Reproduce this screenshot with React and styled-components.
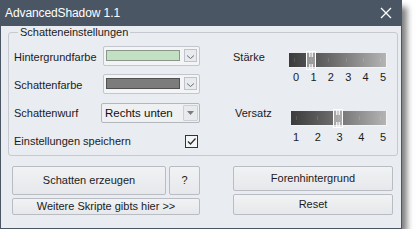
import React from 'react';
import styled, { createGlobalStyle } from 'styled-components';

const GlobalStyle = createGlobalStyle`
  html, body {
    margin: 0;
    padding: 0;
    background: #ffffff;
  }
  body {
    font-family: "Liberation Sans", Arial, sans-serif;
    font-size: 11px;
    color: #1b1b1b;
  }
`;

const sliders = [
  { label: 'Stärke', min: 0, max: 5, value: 1, top: 8, numGap: 1, indent: 0, numPad: '0 1px 0 4px' },
  { label: 'Versatz', min: 1, max: 5, value: 3, top: 10, numGap: 3, indent: 2, numPad: '0 1px 0 2px' },
];

const Chevron = () => (
  <svg width="9" height="6" viewBox="0 0 9 6">
    <path d="M1 1.5 L4.5 4.5 L8 1.5" stroke="#6a6e74" strokeWidth="1" fill="none" />
  </svg>
);

const App = () => {
  return (
    <>
      <GlobalStyle />
      <Window>
        <TitleBar>
          <Title>AdvancedShadow 1.1</Title>
          <CloseIcon width="12" height="12" viewBox="0 0 12 12">
            <path d="M1 1 L11 11 M11 1 L1 11" stroke="#ffffff" strokeWidth="1.3" fill="none" />
          </CloseIcon>
        </TitleBar>
        <Body>
          <Group>
            <Legend>Schatteneinstellungen</Legend>
            <GroupContent>
              <LeftColumn>
                <Row>
                  <Label>Hintergrundfarbe</Label>
                  <ColorPicker>
                    <Swatch $color="#c2e0c2" $edge="#8a968a" />
                    <PickButton>
                      <Chevron />
                    </PickButton>
                  </ColorPicker>
                </Row>
                <Row>
                  <Label>Schattenfarbe</Label>
                  <ColorPicker>
                    <Swatch $color="#7c7c7c" $edge="#505050" />
                    <PickButton>
                      <Chevron />
                    </PickButton>
                  </ColorPicker>
                </Row>
                <Row>
                  <Label>Schattenwurf</Label>
                  <Select>
                    <SelectText>Rechts unten</SelectText>
                    <SelectButton>
                      <svg width="7" height="4" viewBox="0 0 7 4">
                        <path d="M0 0 L7 0 L3.5 4 Z" fill="#7a7d82" />
                      </svg>
                    </SelectButton>
                  </Select>
                </Row>
                <Row>
                  <Label>Einstellungen speichern</Label>
                  <CheckBox>
                    <svg width="11" height="11" viewBox="0 0 11 11">
                      <path d="M2 5.5 L4.5 8 L9.5 2.5" stroke="#2e2e2e" strokeWidth="1.3" fill="none" />
                    </svg>
                  </CheckBox>
                </Row>
              </LeftColumn>
              <RightColumn>
                {sliders.map((s) => {
                  const nums = [];
                  for (let n = s.min; n <= s.max; n++) nums.push(n);
                  const f = (s.value - s.min) / (s.max - s.min);
                  const width = 98 - s.indent;
                  return (
                    <SliderBlock key={s.label}>
                      <SliderLabel $indent={s.indent}>{s.label}</SliderLabel>
                      <SliderColumn $top={s.top} $indent={s.indent}>
                        <TrackArea>
                          <Track>
                            {nums.map((n, i) => (
                              <Tick key={n} style={{ left: 5 + (i * (width - 12)) / (nums.length - 1) }} />
                            ))}
                          </Track>
                          <Thumb style={{ left: f * (width - 10) - 1 }} width="10" height="19" viewBox="0 0 10 19">
                            <rect x="0.5" y="0.5" width="9" height="18" fill="rgba(215,215,215,0.55)" stroke="#ffffff" />
                            <path d="M3.5 1 V6 M5 1 V6 M6.5 1 V6 M3.5 13 V18 M5 13 V18 M6.5 13 V18" stroke="#ffffff" strokeWidth="0.8" />
                          </Thumb>
                        </TrackArea>
                        <Numbers $gap={s.numGap} $pad={s.numPad}>
                          {nums.map((n) => (
                            <span key={n}>{n}</span>
                          ))}
                        </Numbers>
                      </SliderColumn>
                    </SliderBlock>
                  );
                })}
              </RightColumn>
            </GroupContent>
          </Group>
          <ButtonArea>
            <ButtonStack $w={188}>
              <ButtonRow>
                <Button $h={29} $grow>Schatten erzeugen</Button>
                <Button $h={29} $w={31}>?</Button>
              </ButtonRow>
              <Button $h={17}>Weitere Skripte gibts hier &gt;&gt;</Button>
            </ButtonStack>
            <ButtonStack $w={160}>
              <Button $h={25}>Forenhintergrund</Button>
              <Button $h={21}>Reset</Button>
            </ButtonStack>
          </ButtonArea>
        </Body>
      </Window>
    </>
  );
};

const Window = styled.div`
  width: 402px;
  height: 229px;
  box-sizing: border-box;
  border: 1px solid #4b5664;
  border-top: none;
  background: #e9ecf0;
  box-shadow: 6px 6px 6px -1px rgba(0, 0, 0, 0.5);
  display: flex;
  flex-direction: column;
`;

const TitleBar = styled.div`
  height: 26px;
  margin: 0 -1px;
  background: #4b5664;
  display: flex;
  align-items: center;
  justify-content: space-between;
  padding: 0 10px 0 5px;
`;

const Title = styled.span`
  color: #ffffff;
  font-size: 12px;
  letter-spacing: -0.1px;
`;

const CloseIcon = styled.svg`
  display: block;
`;

const Body = styled.div`
  flex: 1;
  padding: 0 3px 0 7px;
  display: flex;
  flex-direction: column;
`;

const Group = styled.fieldset`
  margin: 0;
  padding: 0 0 0 5px;
  border: 1px solid #c6cad0;
  border-radius: 3px;
  min-width: 0;
`;

const Legend = styled.legend`
  padding: 0 2px;
  margin-left: 4px;
  line-height: 13px;
  font-size: 11px;
  color: #1b1b1b;
`;

const GroupContent = styled.div`
  display: flex;
  gap: 33px;
  padding-top: 4px;
`;

const LeftColumn = styled.div`
  width: 186px;
  display: flex;
  flex-direction: column;
`;

const Row = styled.div`
  height: 28px;
  display: flex;
  align-items: center;
  justify-content: space-between;
`;

const Label = styled.span`
  white-space: nowrap;
`;

const ColorPicker = styled.div`
  width: 97px;
  height: 20px;
  box-sizing: border-box;
  margin-top: -3px;
  border: 1px solid #c3c7cd;
  border-radius: 2px;
  background: #f3f4f6;
  display: flex;
  align-items: center;
  justify-content: space-between;
  padding: 0 2px;
`;

const Swatch = styled.div`
  width: 74px;
  height: 11px;
  box-sizing: border-box;
  background: ${(p) => p.$color};
  border: 1px solid ${(p) => p.$edge};
`;

const PickButton = styled.div`
  width: 13px;
  height: 13px;
  box-sizing: border-box;
  border: 1px solid #bfc3c9;
  background: #e8eaed;
  display: flex;
  align-items: flex-end;
  justify-content: center;
  padding-bottom: 1px;
`;

const Select = styled.div`
  width: 99px;
  height: 20px;
  box-sizing: border-box;
  border: 1px solid #b3b7bd;
  border-radius: 2px;
  background: #eef0f2;
  display: flex;
  align-items: center;
  justify-content: space-between;
  padding: 0 1px 0 3px;
`;

const SelectText = styled.span`
  font-size: 11.5px;
  color: #111111;
`;

const SelectButton = styled.div`
  width: 15px;
  height: 16px;
  box-sizing: border-box;
  border: 1px solid #ccd0d5;
  border-radius: 1px;
  background: #e8eaed;
  display: flex;
  align-items: center;
  justify-content: center;
`;

const CheckBox = styled.div`
  width: 13px;
  height: 13px;
  box-sizing: border-box;
  margin-right: 2px;
  border: 1px solid #333333;
  background: #f4f5f7;
  display: flex;
  align-items: center;
  justify-content: center;
`;

const RightColumn = styled.div`
  width: 154px;
  display: flex;
  flex-direction: column;
`;

const SliderBlock = styled.div`
  height: 56px;
  display: flex;
  align-items: flex-start;
`;

const SliderLabel = styled.span`
  width: 56px;
  line-height: 28px;
  padding-left: ${(p) => p.$indent}px;
  box-sizing: border-box;
`;

const SliderColumn = styled.div`
  width: ${(p) => 98 - p.$indent}px;
  margin-left: ${(p) => p.$indent}px;
  margin-top: ${(p) => p.$top}px;
  display: flex;
  flex-direction: column;
`;

const TrackArea = styled.div`
  position: relative;
  height: 19px;
  display: flex;
  align-items: center;
`;

const Track = styled.div`
  position: relative;
  width: 100%;
  height: 15px;
  box-sizing: border-box;
  background: linear-gradient(to right, #3b3b3b, #6c6c6c 45%, #b4b4b4);
  border-right: 1px solid #f4f4f4;
  border-bottom: 1px solid #f4f4f4;
`;

const Tick = styled.span`
  position: absolute;
  top: 5px;
  width: 1px;
  height: 4px;
  background: rgba(255, 255, 255, 0.12);
`;

const Thumb = styled.svg`
  position: absolute;
  top: 0;
  display: block;
`;

const Numbers = styled.div`
  margin-top: ${(p) => p.$gap}px;
  line-height: 13px;
  font-size: 11px;
  display: flex;
  justify-content: space-between;
  padding: ${(p) => p.$pad};
  color: #1b1b1b;
`;

const ButtonArea = styled.div`
  display: flex;
  gap: 33px;
  margin-top: 10px;
  padding-left: 4px;
`;

const ButtonStack = styled.div`
  width: ${(p) => p.$w}px;
  display: flex;
  flex-direction: column;
  gap: 3px;
`;

const ButtonRow = styled.div`
  display: flex;
  gap: 3px;
`;

const Button = styled.button`
  height: ${(p) => p.$h}px;
  width: ${(p) => (p.$w ? `${p.$w}px` : 'auto')};
  flex: ${(p) => (p.$grow ? 1 : 'none')};
  box-sizing: border-box;
  margin: 0;
  padding: 0;
  border: 1px solid #b9bdc3;
  border-radius: 2px;
  background: linear-gradient(#f1f2f4, #e6e8eb);
  font-family: "Liberation Sans", Arial, sans-serif;
  font-size: 11px;
  color: #1b1b1b;
  line-height: 1;
  display: flex;
  align-items: center;
  justify-content: center;
`;

export default App;
